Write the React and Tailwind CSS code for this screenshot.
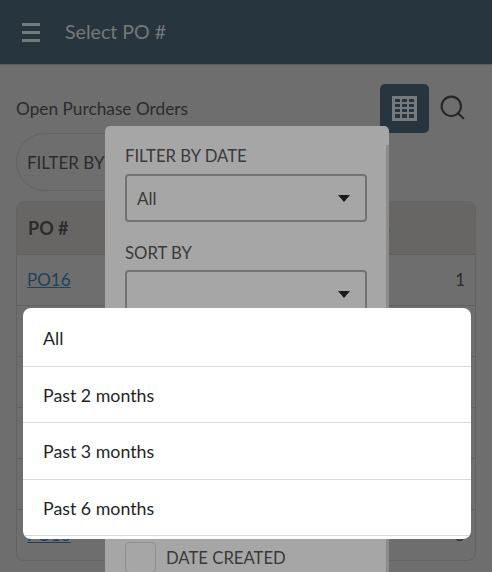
import React from "react";
import { Search } from "lucide-react";

const rows = [
  { po: "PO16", qty: "1" },
  { po: "", qty: "" },
  { po: "", qty: "" },
  { po: "", qty: "" },
  { po: "", qty: "" },
  { po: "PO16", qty: "5" },
];

const options = ["All", "Past 2 months", "Past 3 months", "Past 6 months"];

function GridIcon() {
  return (
    <svg width="25" height="25" viewBox="0 0 25 25">
      <path
        fill="#777a7c"
        fillRule="evenodd"
        d="M0 0h25v25H0z M3 3v3h5V3z M10 3v3h5V3z M17 3v3h5V3z M3 8v3h5V8z M10 8v3h5V8z M17 8v3h5V8z M3 13v3h5v-3z M10 13v3h5v-3z M17 13v3h5v-3z M3 18v4h5v-4z M10 18v4h5v-4z M17 18v4h5v-4z"
      />
    </svg>
  );
}

function Caret() {
  return <div className="h-0 w-0 border-x-[6px] border-t-[7px] border-x-transparent border-t-[#1c1c1c]" />;
}

function Select({ value }) {
  return (
    <div className="flex h-[48px] w-[242px] items-center justify-between rounded-[4px] border-2 border-[#737373] pl-[10px] pr-[15px] text-[17px] text-[#3a3a3a]">
      <span className="pt-[2px]">{value}</span>
      <Caret />
    </div>
  );
}

export default function App() {
  return (
    <div className="relative h-[572px] w-[492px] overflow-hidden bg-[#6e6e6e] font-['Lato',sans-serif] text-[#2c2c2c]">
      {/* Header */}
      <div className="flex h-[65px] items-center gap-[25px] border-b border-[#555c60] bg-[#27353e] pl-[22px]">
        <div className="flex w-[18px] flex-col gap-[5px]">
          <div className="h-[3px] bg-[#74797c]" />
          <div className="h-[3px] bg-[#74797c]" />
          <div className="h-[3px] bg-[#74797c]" />
        </div>
        <span className="text-[19.6px] text-[#74797c]">Select PO #</span>
      </div>

      {/* Page */}
      <div className="px-4">
        <div className="flex h-[68px] items-end">
          <span className="flex-1 self-end pb-[11px] text-[17.3px]">Open Purchase Orders</span>
          <div className="flex h-[49px] w-[49px] items-center justify-center rounded-[5px] bg-[#27353e]">
            <GridIcon />
          </div>
          <div className="flex w-[47px] justify-end pb-[11px] pr-[9px]">
            <Search size={29} strokeWidth={1.75} className="text-[#262626]" />
          </div>
        </div>

        <div className="flex h-[58px] w-[200px] items-center rounded-full border border-[#636363] pl-[10px] pt-[2px] text-[17px]">
          FILTER BY
        </div>

        <div className="mt-[10px] overflow-hidden rounded-[8px] border border-[#636363]">
          <div className="flex h-[52px] items-center justify-between bg-[#686664] pl-[11px] pr-[85px] text-[18px] font-bold">
            <span>PO #</span>
            <span className="text-[#1f4257]">ITEMS</span>
          </div>
          {rows.map((row, i) => (
            <div
              key={i}
              className="flex h-[51px] items-center justify-between border-t border-[#606060] px-[10px] text-[17px]"
            >
              <span className="text-[#1f4257] underline">{row.po}</span>
              <span>{row.qty}</span>
            </div>
          ))}
        </div>
      </div>

      {/* Filter panel */}
      <div className="absolute left-[105px] top-[126px] h-[460px] w-[284px] rounded-t-[5px] bg-[#a6a6a6] pl-[20px] pt-[18px] text-[#3a3a3a]">
        <div className="absolute bottom-0 right-0 top-[19px] w-[3px] bg-[#8c8c8c]" />
        <div className="mb-[5px] text-[16.7px] leading-[25px]">FILTER BY DATE</div>
        <Select value="All" />
        <div className="mb-[4px] mt-[18px] text-[16.7px] leading-[26px]">SORT BY</div>
        <Select value="" />
        <div className="mt-[224px] flex items-center gap-[10px] text-[16.7px]">
          <div className="h-[31px] w-[31px] rounded-[4px] border border-[#8f8f8f]" />
          <span className="pt-[2px]">DATE CREATED</span>
        </div>
      </div>

      {/* Dropdown list */}
      <div className="absolute left-[23px] top-[308px] w-[448px] overflow-hidden rounded-[8px] bg-white pb-[3px] pt-[2px] text-[17.8px] text-[#1f1f1f]">
        {options.map((opt) => (
          <div key={opt} className="flex h-[56.5px] items-center border-b border-[#d9d9d9] pl-[20px] pt-[2px]">
            {opt}
          </div>
        ))}
      </div>
    </div>
  );
}
